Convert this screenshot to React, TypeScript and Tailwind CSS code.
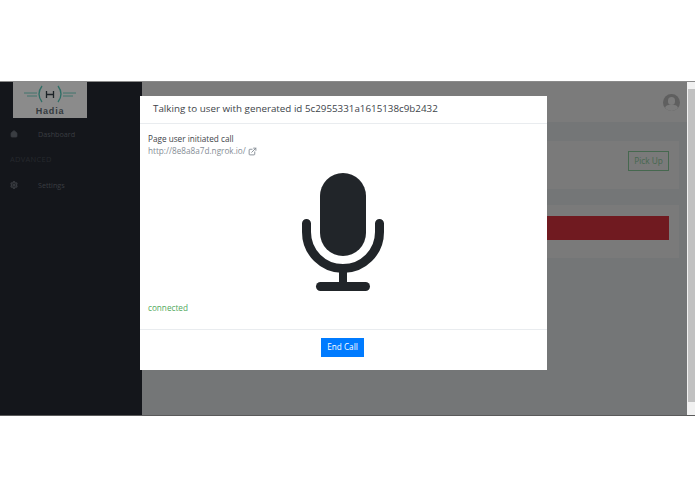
import { Home, Settings, ExternalLink } from "lucide-react";

function Logo() {
  return (
    <div className="ml-[13px] flex h-[36px] w-[74px] flex-col items-center bg-[#8b8b8b]">
      <svg width="54" height="23" viewBox="0 0 54 23" fill="none">
        <path d="M1 11h13M4 14h10M40 11h13M40 14h10" stroke="#2f6f66" strokeWidth="0.8" />
        <path d="M19 4q-6 8 0 16M35 4q6 8 0 16" stroke="#2f6f66" strokeWidth="1.3" />
        <path d="M23.500 9v7M30.500 9v7M23.500 12.500h7" stroke="#1c2226" strokeWidth="1.3" />
      </svg>
      <span className="mt-[1px] font-['Liberation_Sans',sans-serif] text-[9px] leading-[10px] font-bold tracking-[0.8px] text-[#343a3e]">Hadia</span>
    </div>
  );
}

function Sidebar() {
  return (
    <div className="w-[142px] shrink-0 bg-[#14161b] text-[7.2px] text-[#3a3d42]">
      <Logo />
      <div className="mt-[10px] flex h-[12px] items-center pl-[10px]">
        <Home size={8} fill="#3a3d42" />
        <span className="ml-[20px]">Dashboard</span>
      </div>
      <div className="mt-[14px] pl-[10px] text-[7.5px] leading-[10px] tracking-[0.3px] text-[#26292e]">ADVANCED</div>
      <div className="mt-[15px] flex h-[12px] items-center pl-[10px]">
        <Settings size={8} strokeWidth={3.5} />
        <span className="ml-[20px]">Settings</span>
      </div>
    </div>
  );
}

function Background() {
  return (
    <div className="flex min-w-0 flex-1 flex-col bg-[#747677]">
      <div className="flex h-[40px] items-center justify-end bg-[#7b7b7b] pr-[7px]">
        <div className="relative h-[17px] w-[17px] overflow-hidden rounded-full bg-[#5f5f5f]">
          <div className="absolute top-[3px] left-[5px] h-[8px] w-[7px] rounded-full bg-[#7b7b7b]" />
          <div className="absolute top-[11px] left-[2px] h-[8px] w-[13px] rounded-full bg-[#7b7b7b]" />
        </div>
      </div>
      <div className="mt-[19px] mr-[8px] ml-[8px] flex h-[48px] items-start justify-end bg-[#7a7a7a] pt-[10px] pr-[10px]">
        <button className="h-[20px] w-[41px] border border-[#46684f] text-[8.3px] text-[#46684f]">Pick Up</button>
      </div>
      <div className="mt-[16px] mr-[8px] ml-[8px] h-[53px] bg-[#7a7a7a] pt-[11px] pr-[10px]">
        <div className="h-[24px] bg-[#701a20]" />
      </div>
    </div>
  );
}

function Mic() {
  return (
    <svg width="82" height="118" viewBox="0 0 82 118" fill="none" className="ml-[154px]">
      <rect x="18" y="0" width="46" height="83" rx="23" fill="#212529" />
      <path d="M4.500 50.500v8.500a36.500 36.500 0 0 0 73 0v-8.500" stroke="#212529" strokeWidth="9" strokeLinecap="round" />
      <path d="M41 96v16" stroke="#212529" strokeWidth="8" />
      <rect x="14" y="109" width="54" height="9" rx="4.500" fill="#212529" />
    </svg>
  );
}

function Modal() {
  return (
    <div className="absolute top-[14px] left-[140px] flex h-[274px] w-[407px] flex-col bg-white text-[#3d4349]">
      <div className="flex h-[28px] items-center border-b border-[#e9ecef] pl-[13px] text-[9.8px]">
        Talking to user with generated id 5c2955331a1615138c9b2432
      </div>
      <div className="h-[205px] px-[8px] pt-[9px] text-[8.2px] leading-[12px]">
        <div>Page user initiated call</div>
        <div className="flex items-center gap-[2px] text-[#868e96]">
          http://8e8a8a7d.ngrok.io/
          <ExternalLink size={9} strokeWidth={2.5} />
        </div>
        <div className="mt-[16px]">
          <Mic />
        </div>
        <div className="mt-[11px] text-[#51a95d]">connected</div>
      </div>
      <div className="flex flex-1 items-start justify-center border-t border-[#e9ecef] pt-[8px] pr-[2px]">
        <button className="h-[19px] w-[43px] bg-[#007bff] text-[8.2px] text-white">End Call</button>
      </div>
    </div>
  );
}

export default function App() {
  return (
    <div className="h-[494px] bg-white pt-[81px] font-['Open_Sans',sans-serif]">
      <div className="relative flex h-[335px] border-t border-b border-t-[#8a8a8a] border-b-[#5a5a5a]">
        <Sidebar />
        <Background />
        <Modal />
        <div className="flex w-[8px] shrink-0 flex-col bg-[#f1f1f1]">
          <div className="mt-[7px] ml-[1px] h-[313px] bg-[#c1c1c1]" />
        </div>
      </div>
    </div>
  );
}
